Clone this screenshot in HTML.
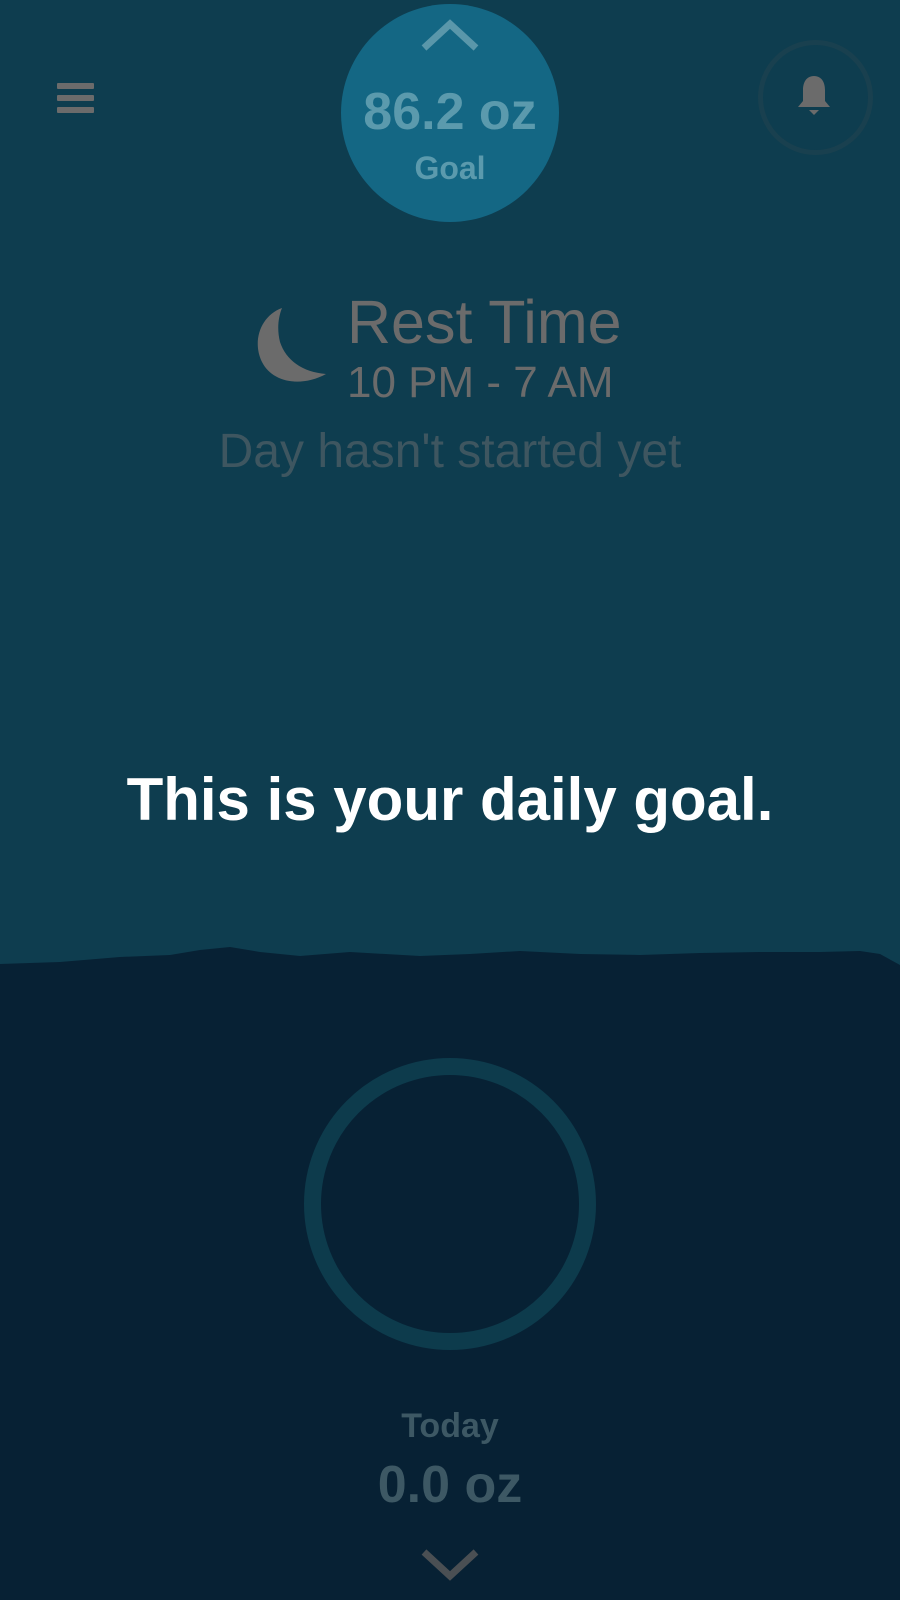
<!DOCTYPE html>
<html><head><meta charset="utf-8"><style>
html,body{margin:0;padding:0}
body{width:900px;height:1600px;position:relative;overflow:hidden;background:#072134;font-family:"Liberation Sans",sans-serif}
.top{position:absolute;left:0;top:0;width:900px;height:980px;background:#0e3d4f}
.abs{position:absolute}
.c{text-align:center;width:900px;left:0}
</style></head><body>
<div class="top"></div>
<svg class="abs" style="left:0;top:930px" width="900" height="80" viewBox="0 0 900 80">
<path d="M0 34 L60 32 L120 27 L170 25 L200 20 L230 17 L260 22 L300 26 L350 22 L420 26 L470 24 L520 21 L580 24 L640 25 L700 23 L760 22 L820 22 L860 21 L880 24 L900 35 L900 80 L0 80 Z" fill="#072134"/>
</svg>
<div class="abs" style="left:57px;top:83px;width:37px;height:6px;background:#6b6b6b;border-radius:1px"></div>
<div class="abs" style="left:57px;top:95px;width:37px;height:6px;background:#6b6b6b;border-radius:1px"></div>
<div class="abs" style="left:57px;top:107px;width:37px;height:6px;background:#6b6b6b;border-radius:1px"></div>
<div class="abs" style="left:341px;top:4px;width:218px;height:218px;border-radius:50%;background:#146784"></div>
<svg class="abs" style="left:420px;top:18px" width="60" height="36"><path d="M4 30 L30 6 L56 30" fill="none" stroke="#5a97aa" stroke-width="7"/></svg>
<div class="abs c" style="top:82px;font-size:52px;color:#5b9aad;font-weight:bold">86.2 oz</div>
<div class="abs c" style="top:150px;font-size:32px;color:#5b9aad;font-weight:bold">Goal</div>
<div class="abs" style="left:758px;top:40px;width:115px;height:115px;border-radius:50%;border:5px solid #19404f;box-sizing:border-box"></div>
<svg class="abs" style="left:796px;top:74px" width="36" height="44" viewBox="0 0 36 44">
<path d="M18 2 C10 2 7 9 7 16 L7 27 L2 33 L34 33 L29 27 L29 16 C29 9 26 2 18 2 Z" fill="#6b6b6b"/>
<path d="M13 36 L23 36 L18 41 Z" fill="#6b6b6b"/>
</svg>
<svg class="abs" style="left:252px;top:306px" width="80" height="82" viewBox="0 0 80 82">
<path d="M30 2 C8 10 0 36 10 56 C20 76 48 82 74 68 C50 66 34 54 28 36 C25 24 26 12 30 2 Z" fill="#6b6b6b"/>
</svg>
<div class="abs" style="left:347px;top:287px;font-size:61px;color:#6b6b6b">Rest Time</div>
<div class="abs" style="left:347px;top:358px;font-size:44px;color:#6b6b6b">10 PM - 7 AM</div>
<div class="abs c" style="top:424px;font-size:48px;color:#3e5660">Day hasn't started yet</div>
<div class="abs c" style="top:765px;font-size:60px;color:#fff;font-weight:bold">This is your daily goal.</div>
<div class="abs" style="left:304px;top:1058px;width:292px;height:292px;border-radius:50%;border:17px solid #0d3b4c;box-sizing:border-box"></div>
<div class="abs c" style="top:1407px;font-size:34px;color:#3d5864;font-weight:bold">Today</div>
<div class="abs c" style="top:1455px;font-size:52px;color:#3d5864;font-weight:bold">0.0 oz</div>
<svg class="abs" style="left:420px;top:1546px" width="60" height="36"><path d="M4 6 L30 30 L56 6" fill="none" stroke="#4a4f53" stroke-width="7"/></svg>
</body></html>
